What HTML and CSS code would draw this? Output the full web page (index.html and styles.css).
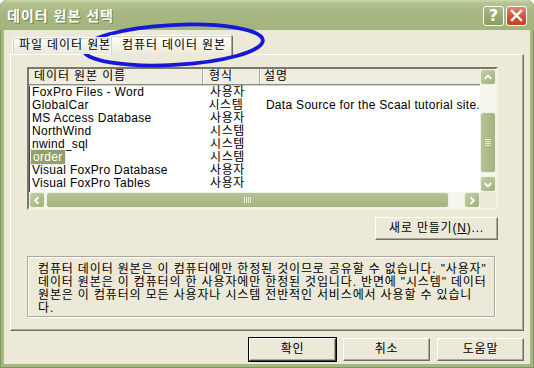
FILE: index.html
```html
<!DOCTYPE html>
<html lang="ko">
<head>
	<meta charset="UTF-8">
	<title>데이터 원본 선택</title>
	<link rel="stylesheet" href="styles.css">
</head>
<body>
<div class="window">
	<div class="titlebar">
		<span class="title">데이터 원본 선택</span>
		<div class="caption_btns">
			<div class="cap_btn help">?</div>
			<div class="cap_btn close">
				<svg width="13" height="13" viewBox="0 0 13 13"><path d="M2 2 L11 11 M11 2 L2 11" stroke="#fff" stroke-width="2.4" stroke-linecap="square"/></svg>
			</div>
		</div>
	</div>
	<div class="client">
		<div class="tabs">
			<div class="tab">파일 데이터 원본</div>
			<div class="tab on">컴퓨터 데이터 원본</div>
		</div>
		<div class="panel">
			<div class="listview">
				<div class="list_main">
					<div class="list_head">
						<div class="hcol c1">데이터 원본 이름</div>
						<div class="hcol c2">형식</div>
						<div class="hcol c3">설명</div>
					</div>
					<div class="row"><span class="c1">FoxPro Files - Word</span><span class="c2">사용자</span><span class="c3"></span></div>
					<div class="row"><span class="c1">GlobalCar</span><span class="c2">시스템</span><span class="c3">Data Source for the Scaal tutorial site.</span></div>
					<div class="row"><span class="c1">MS Access Database</span><span class="c2">사용자</span><span class="c3"></span></div>
					<div class="row"><span class="c1">NorthWind</span><span class="c2">시스템</span><span class="c3"></span></div>
					<div class="row"><span class="c1">nwind_sql</span><span class="c2">시스템</span><span class="c3"></span></div>
					<div class="row"><span class="c1"><em class="sel">order</em></span><span class="c2">시스템</span><span class="c3"></span></div>
					<div class="row"><span class="c1">Visual FoxPro Database</span><span class="c2">사용자</span><span class="c3"></span></div>
					<div class="row"><span class="c1">Visual FoxPro Tables</span><span class="c2">사용자</span><span class="c3"></span></div>
				</div>
				<div class="vscroll">
					<div class="sbtn"><svg width="15" height="15" viewBox="0 0 15 15"><polyline points="4,9 7.5,5.5 11,9" fill="none" stroke="#fff" stroke-width="2"/></svg></div>
					<div class="vtrack">
						<div class="vthumb"><i></i><i></i><i></i><i></i></div>
					</div>
					<div class="sbtn"><svg width="15" height="15" viewBox="0 0 15 15"><polyline points="4,6 7.5,9.5 11,6" fill="none" stroke="#fff" stroke-width="2"/></svg></div>
				</div>
				<div class="hscroll">
					<div class="sbtn"><svg width="15" height="15" viewBox="0 0 15 15"><polyline points="9,4 5.5,7.5 9,11" fill="none" stroke="#fff" stroke-width="2"/></svg></div>
					<div class="htrack">
						<div class="hthumb"><i></i><i></i><i></i><i></i></div>
					</div>
					<div class="sbtn"><svg width="15" height="15" viewBox="0 0 15 15"><polyline points="6,4 9.5,7.5 6,11" fill="none" stroke="#fff" stroke-width="2"/></svg></div>
				</div>
				<div class="corner"></div>
			</div>
			<div class="new_row">
				<div class="btn new">새로 만들기(<u>N</u>)...</div>
			</div>
			<div class="note">컴퓨터 데이터 원본은 이 컴퓨터에만 한정된 것이므로 공유할 수 없습니다. "사용자"<br>데이터 원본은 이 컴퓨터의 한 사용자에만 한정된 것입니다. 반면에 "시스템" 데이터<br>원본은 이 컴퓨터의 모든 사용자나 시스템 전반적인 서비스에서 사용할 수 있습니<br>다.</div>
		</div>
		<div class="btn_row">
			<div class="btn default">확인</div>
			<div class="btn">취소</div>
			<div class="btn">도움말</div>
		</div>
	</div>
	<!-- 손으로 그린 파란 동그라미 -->
	<svg class="mark" width="534" height="368" viewBox="0 0 534 368">
		<ellipse cx="173" cy="45" rx="90" ry="20" transform="rotate(-3 173 45)" fill="none" stroke="#1717d8" stroke-width="3.8"/>
	</svg>
</div>
</body>
</html>
```

FILE: styles.css
```css
*{
	margin:0;
	padding:0;
	box-sizing:border-box;
}

body{
	background:#fff;
	font-family:"Liberation Sans","Noto Sans CJK KR",sans-serif;
	font-size:12px;
	letter-spacing:0.3px;
	color:#000;
}

.window{
	width:534px;
	height:368px;
	display:flex;
	flex-direction:column;
	background:#a5b880;
	border-radius:7px 7px 0 0;
	padding:0 4px 4px 4px;
	box-shadow:inset 1px 0 #7d955a, inset -1px 0 #7d955a, inset 0 -1px #7d955a;
	position:relative;
	overflow:hidden;
}

/* 제목 표시줄 */
.titlebar{
	height:30px;
	margin:0 -4px;
	padding:0 7px 0 7px;
	display:flex;
	align-items:center;
	justify-content:space-between;
	background:linear-gradient(#cdd7ad 0,#b4c391 3px,#a8b883 40%,#a2b37c 100%);
	border-radius:7px 7px 0 0;
}

.title{
	color:#fff;
	font-family:"Noto Sans CJK KR",sans-serif;
	font-weight:bold;
	font-size:14px;
	letter-spacing:1px;
	text-shadow:1px 1px #6f7f4c;
	margin-top:-1px;
}

.caption_btns{
	display:flex;
	gap:2px;
	margin-top:1px;
}

.cap_btn{
	width:21px;
	height:20px;
	border:1px solid #fff;
	border-radius:3px;
	display:flex;
	align-items:center;
	justify-content:center;
}

.help{
	background:linear-gradient(#a9b886,#8a9c66);
	color:#fff;
	font-family:"DejaVu Sans",sans-serif;
	font-weight:bold;
	font-size:16px;
}

.close{
	background:linear-gradient(#e8866a,#cf4f2e 60%,#c2441f);
}

/* 대화상자 본문 */
.client{
	flex:1;
	background:#ece9d8;
	padding:5px 6px 3px 6px;
	display:flex;
	flex-direction:column;
}

.tabs{
	height:20px;
	display:flex;
	align-items:flex-end;
	padding-left:2px;
	margin-bottom:-1px;
	position:relative;
	z-index:1;
	letter-spacing:0.9px;
}

.tab{
	height:17px;
	margin-bottom:1px;
	width:99px;
	padding-left:6px;
	line-height:15px;
	white-space:nowrap;
	background:linear-gradient(#fdfdfb,#eae7d8);
	border:1px solid #aca899;
	border-top-color:#fff;
	border-left-color:#fff;
	border-bottom:none;
	box-shadow:inset 0 1px #d5d2c4, inset 1px 0 #d5d2c4, 1px 0 #716f64;
	border-radius:2px 2px 0 0;
}

.tab.on{
	height:20px;
	margin-bottom:0;
	width:122px;
	margin-left:-1px;
	padding-left:11px;
	line-height:18px;
	background:linear-gradient(#fefefc,#ece9d8);
}

.panel{
	height:277px;
	border:1px solid #716f64;
	border-top-color:#fff;
	border-left-color:#fff;
	box-shadow:inset -1px -1px #aca899;
	padding:12px 25px 0 16px;
	display:flex;
	flex-direction:column;
}

/* 목록 */
.listview{
	width:471px;
	height:143px;
	background:#fff;
	border:2px solid;
	border-color:#7a786b #f4f2e8 #f4f2e8 #7a786b;
	box-shadow:inset 1px 1px #404040;
	display:grid;
	grid-template-columns:1fr 16px;
	grid-template-rows:1fr 16px;
	overflow:hidden;
}

.list_main{
	overflow:hidden;
}

.list_head{
	display:flex;
	height:16px;
	background:#efede2;
	border-bottom:1px solid #8d8b7d;
	box-shadow:0 1px #d5d2c4;
	line-height:15px;
	white-space:nowrap;
	letter-spacing:0.9px;
}

.hcol{
	border-right:1px solid #aca899;
	box-shadow:1px 0 #fff;
}

.hcol.c1{width:174px;padding-left:5px;}
.hcol.c2{width:57px;padding-left:6px;}
.hcol.c3{flex:1;padding-left:4px;border-right:none;box-shadow:none;}

.row{
	display:flex;
	height:13px;
	line-height:13px;
	white-space:nowrap;
}

.list_head + .row{
	margin-top:1px;
}

.row .c1{width:174px;padding-left:3px;}
.row .c2{width:57px;padding-left:7px;letter-spacing:0.6px;}
.row .c3{flex:1;padding-left:8px;}

.sel{
	font-style:normal;
	background:#939e6d;
	color:#fff;
	outline:1px dotted #d8dcc4;
	padding:0 2px;
	margin-left:-1px;
}

/* 스크롤바 */
.sbtn{
	width:16px;
	height:16px;
	border:1px solid #eef1e4;
	border-radius:3px;
	background:linear-gradient(135deg,#c3d0a6,#9fb179);
	display:flex;
	align-items:center;
	justify-content:center;
}

.vscroll{
	display:flex;
	flex-direction:column;
	background:#f6f6ee;
}

.vtrack{
	flex:1;
	padding:27px 0 2px 0;
}

.vthumb{
	height:61px;
	border:1px solid #eef1e4;
	border-radius:3px;
	background:linear-gradient(90deg,#b6c496,#a3b47f);
	display:flex;
	flex-direction:column;
	align-items:center;
	justify-content:center;
	gap:1px;
}

.vthumb i{
	display:block;
	width:6px;
	height:1px;
	background:#e4ead4;
}

.hscroll{
	display:flex;
	background:#f6f6ee;
}

.htrack{
	flex:1;
	padding-right:15px;
}

.hthumb{
	height:16px;
	margin-left:1px;
	border:1px solid #eef1e4;
	border-radius:3px;
	background:linear-gradient(#b6c496,#a3b47f);
	display:flex;
	align-items:center;
	justify-content:center;
	gap:1px;
}

.hthumb i{
	display:block;
	width:1px;
	height:6px;
	background:#e4ead4;
}

.corner{
	background:#ece9d8;
}

/* 버튼 */
.btn{
	height:23px;
	width:87px;
	text-align:center;
	line-height:20px;
	white-space:nowrap;
	letter-spacing:0.8px;
	background:#ece9d8;
	border:1px solid;
	border-color:#fff #716f64 #716f64 #fff;
	box-shadow:inset -1px -1px #aca899;
}

.btn.default{
	outline:1px solid #000;
	border-color:#fff #404040 #404040 #fff;
}

.new_row{
	display:flex;
	justify-content:flex-end;
	margin-top:7px;
}

.btn.new{
	width:123px;
}

.btn u{
	text-decoration:underline;
}

.note{
	margin-top:16px;
	width:468px;
	height:61px;
	padding:6px 0 0 10px;
	line-height:13px;
	white-space:nowrap;
	letter-spacing:0.85px;
	border:1px solid #aca899;
	box-shadow:inset 1px 1px #fff, 1px 1px #fff;
}

.btn_row{
	display:flex;
	justify-content:flex-end;
	gap:7px;
	margin-top:7px;
}

.mark{
	position:absolute;
	left:0;
	top:0;
	pointer-events:none;
}
```
